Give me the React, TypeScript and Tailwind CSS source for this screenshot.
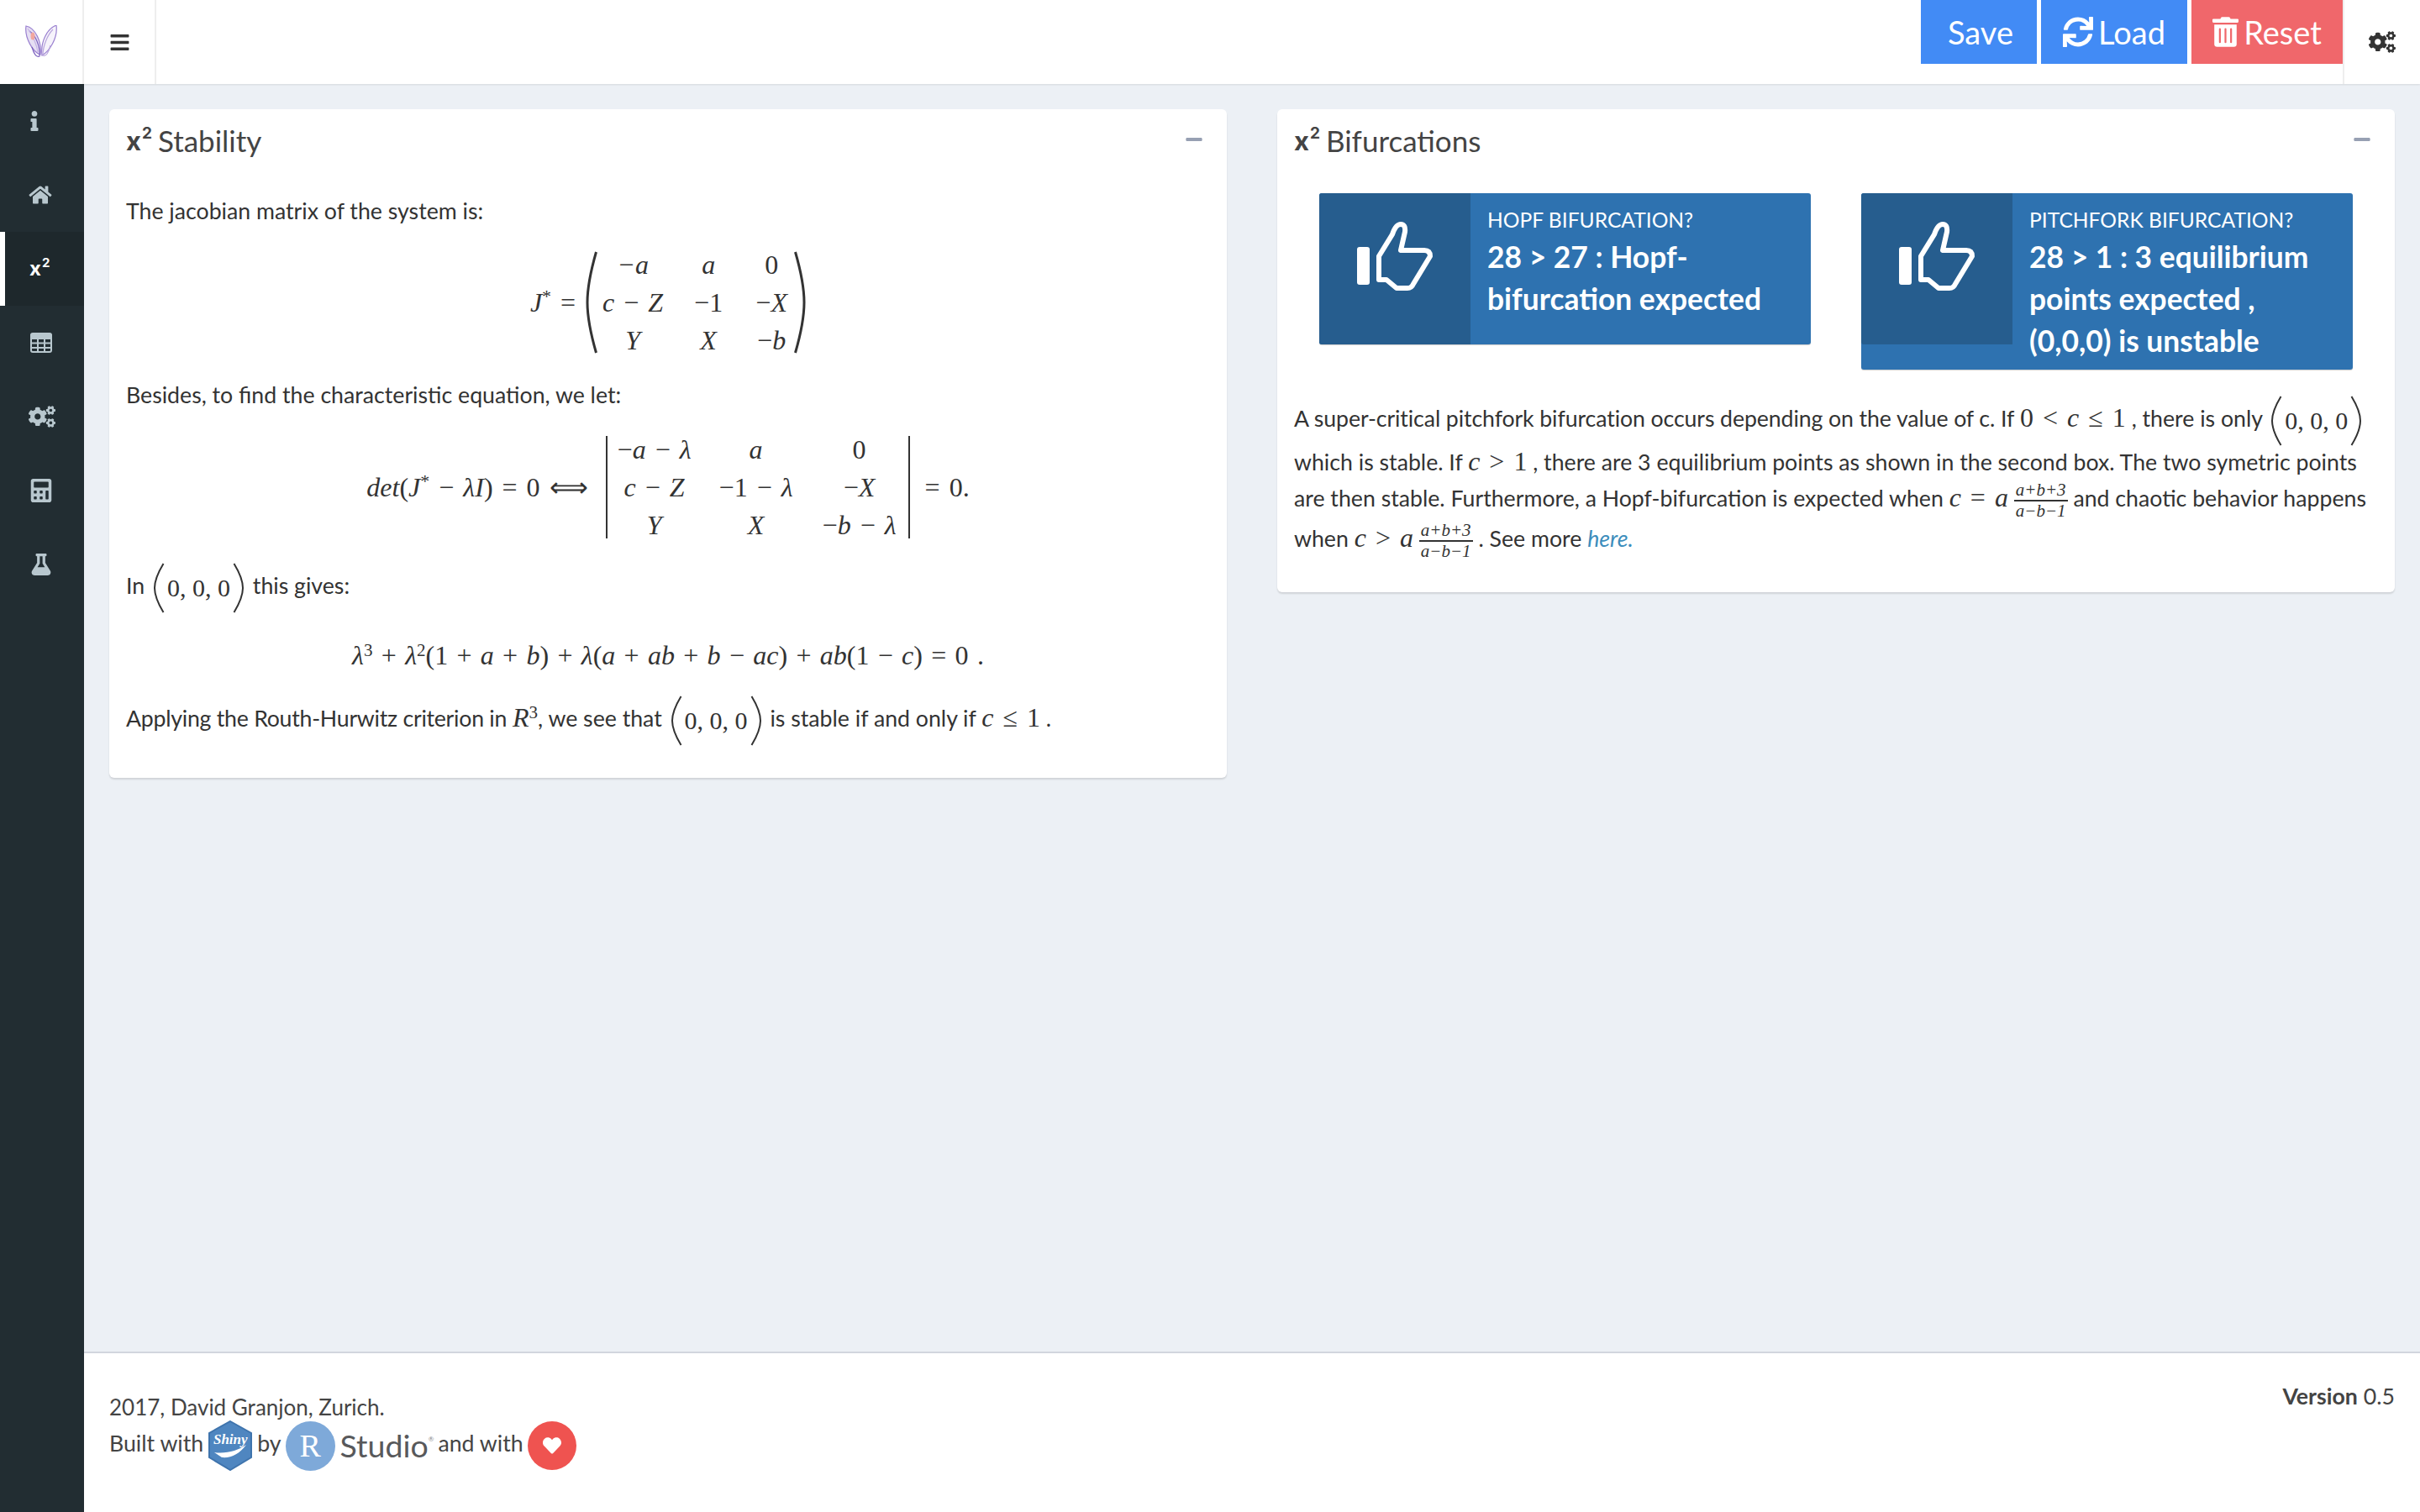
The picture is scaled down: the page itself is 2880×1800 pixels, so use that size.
import { FaBars, FaCalculator, FaCogs, FaFlask, FaHeart, FaHome, FaInfo, FaMinus, FaSync, FaTrashAlt } from 'react-icons/fa';
import type { ReactNode } from 'react';

const serif = "font-['Liberation_Serif',serif]";
const math = "font-['Liberation_Serif',serif] text-[32px] [word-spacing:3px]";

function TableIcon() {
    return (
        <svg width="26" height="24" viewBox="0 0 26 24" fill="none" stroke="currentColor" strokeWidth="2">
            <rect x="1" y="1" width="24" height="22" rx="2" />
            <path d="M1 7 H25 M1 12.5 H25 M1 18 H25 M9 7 V23 M17 7 V23" />
            <path d="M1 3 H25 V7 H1 Z" fill="currentColor" />
        </svg>
    );
}

// the x² mark used as an icon, real text
function Square({ big }: { big?: boolean }) {
    return (
        <span className={`inline-flex items-start font-bold leading-none font-['Inter',sans-serif] ${big ? 'text-[31px]' : 'text-[24px]'}`}>
            <span>x</span>
            <span className={big ? 'text-[19px] -mt-[3px] ml-[1px]' : 'text-[15px] -mt-[3px] ml-[1px]'}>2</span>
        </span>
    );
}

const sideItems = [
    { icon: <FaInfo className="w-[14px] h-[24px]" />, x: 'pl-[34px]' },
    { icon: <FaHome className="w-[28px] h-[24px]" />, x: 'pl-[34px]' },
    { icon: <Square />, x: 'pl-[30px]', active: true },
    { icon: <TableIcon />, x: 'pl-[36px]' },
    { icon: <FaCogs className="w-[32px] h-[28px]" />, x: 'pl-[34px]' },
    { icon: <FaCalculator className="w-[26px] h-[28px]" />, x: 'pl-[36px]' },
    { icon: <FaFlask className="w-[26px] h-[26px]" />, x: 'pl-[36px]' },
];

// tall bracket drawn around a matrix or a tuple
function Paren({ h, flip }: { h: number; flip?: boolean }) {
    return (
        <svg width="14" height={h} viewBox={`0 0 14 ${h}`} className={flip ? 'shrink-0 -scale-x-100' : 'shrink-0'}>
            <path
                d={`M12.5 1 C4 ${h * 0.25} 2 ${h * 0.38} 2 ${h / 2} C2 ${h * 0.62} 4 ${h * 0.75} 12.5 ${h - 1}`}
                fill="none"
                stroke="#333"
                strokeWidth={h > 100 ? 3 : 2}
            />
        </svg>
    );
}

function I({ children }: { children: ReactNode }) {
    return <span className="italic">{children}</span>;
}

function Star() {
    return <sup className="text-[22px]">*</sup>;
}

function Tuple() {
    return (
        <span className={`inline-flex items-center align-middle gap-[3px] mx-[3px] ${serif} text-[30px] text-[#333]`}>
            <Paren h={60} />
            <span>0, 0, 0</span>
            <Paren h={60} flip />
        </span>
    );
}

function Frac({ top, bottom }: { top: string; bottom: string }) {
    return (
        <span className={`inline-flex flex-col items-center align-middle -my-[8px] text-[21px] leading-[23px] italic ${serif}`}>
            <span className="border-b-2 border-[#333] px-[2px]">{top}</span>
            <span>{bottom}</span>
        </span>
    );
}

function Cell({ children }: { children: ReactNode }) {
    return <div className="text-center h-[45px] leading-[45px] whitespace-nowrap">{children}</div>;
}

function Box({ title, className, children }: { title: string; className: string; children: ReactNode }) {
    return (
        <section className={`bg-white rounded-[6px] shadow-[0_2px_2px_rgba(0,0,0,0.12)] ${className}`}>
            <div className="flex items-center justify-between h-[74px] px-[20px]">
                <h3 className="flex items-center gap-[7px] text-[35px] text-[#444] leading-none">
                    <Square big />
                    {title}
                </h3>
                <FaMinus className="w-[22px] h-[22px] mr-[8px] -mt-[2px] text-[#97a0b3]" />
            </div>
            {children}
        </section>
    );
}

function ThumbIcon() {
    return (
        <svg width="90" height="83" viewBox="0 0 90 83" fill="none" stroke="white" strokeWidth="6" className="shrink-0">
            <rect x="0" y="30" width="15" height="45" rx="3" fill="white" stroke="none" />
            <path d="M26 41 L42 15 Q46 3 52 3 Q58 3 57 12 L52 34 L80 34 Q87 34 87 41 L67 74 Q65 79 60 79 L47 79 L35 69 L26 69 Z" strokeLinejoin="round" />
        </svg>
    );
}

function InfoBox({ label, lines, h }: { label: string; lines: string[]; h: string }) {
    return (
        <div className={`flex-1 bg-[#2e72b0] text-white rounded-[3px] shadow-[0_1px_1px_rgba(0,0,0,0.2)] flex items-start ${h}`}>
            <div className="w-[180px] h-[180px] pb-[29px] bg-[#265d8e] rounded-l-[3px] flex items-center justify-center shrink-0">
                <ThumbIcon />
            </div>
            <div className="pl-[20px] pt-[12px] whitespace-nowrap">
                <div className="text-[24.6px] leading-[39px] uppercase">{label}</div>
                {lines.map((line) => (
                    <div key={line} className="text-[35.4px] font-bold leading-[50px]">{line}</div>
                ))}
            </div>
        </div>
    );
}

function Logo() {
    return (
        <svg width="38" height="40" viewBox="0 0 38 40" fill="none" stroke="#9a80d0" strokeWidth="1.2">
            <path d="M1 1 C12 3 20 20 18 35 C9 32 -1 15 1 1 Z" fill="#e6dff3" />
            <path d="M37 0 C26 4 18 20 20 36 C29 31 39 15 37 0 Z" fill="#f6f3fb" />
            <path d="M5 7 C12 12 18 24 17 37 C13 39 10 33 8 26" stroke="#7a5fbd" />
            <path d="M33 5 C27 11 21 24 21 36 C25 38 28 32 30 24" stroke="#b9a6dd" />
            <path d="M3 4 C9 12 14 24 15 32" stroke="#c4b3e4" />
            <ellipse cx="9" cy="13" rx="2.5" ry="4.5" fill="#f2a79f" stroke="none" />
        </svg>
    );
}

function ShinyLogo() {
    return (
        <span className="relative inline-flex items-center justify-center w-[54px] h-[60px] shrink-0">
            <svg width="54" height="60" viewBox="0 0 54 60" className="absolute inset-0">
                <polygon points="27,1 52,15 52,44 27,59 2,44 2,15" fill="#4f86c0" stroke="#3f74ad" strokeWidth="2" />
                <path d="M8 38 C22 40 36 36 46 29 C38 40 28 45 17 44 Z" fill="white" />
            </svg>
            <span className={`relative -mt-[14px] italic font-bold text-[17px] text-white ${serif}`}>Shiny</span>
        </span>
    );
}

function RStudioLogo() {
    return (
        <span className="inline-flex items-center gap-[6px] shrink-0">
            <span className={`w-[59px] h-[59px] rounded-full bg-[#7ea9d9] text-white text-[38px] flex items-center justify-center ${serif}`}>R</span>
            <span className="text-[37.5px] text-[#58595b] leading-none">Studio</span>
            <span className="-ml-[6px] -mt-[16px] text-[8px] text-[#888] leading-none">®</span>
        </span>
    );
}

export default function App() {
    return (
        <div className="w-[2880px] h-[1800px] flex flex-col bg-[#ecf0f5] overflow-hidden font-['Lato',sans-serif] text-[#333] text-[26.7px]">
            {/* Header */}
            <header className="h-[100px] bg-white flex shrink-0 shadow-[0_1px_2px_rgba(0,0,0,0.1)] relative">
                <div className="w-[100px] border-r-2 border-[#eee] flex items-center justify-center">
                    <Logo />
                </div>
                <div className="w-[86px] border-r-2 border-[#eee] flex items-center justify-center">
                    <FaBars className="w-[25px] h-[25px] text-[#333]" />
                </div>
                <div className="flex-1 flex justify-end items-start gap-[5px] text-white text-[38px]">
                    <button className="w-[138px] h-[76px] pl-[4px] bg-[#428bf5] flex items-center justify-center">Save</button>
                    <button className="w-[174px] h-[76px] bg-[#428bf5] flex items-center justify-center gap-[6px]">
                        <FaSync className="w-[36px] h-[36px]" />
                        Load
                    </button>
                    <button className="w-[180px] h-[76px] bg-[#f0676b] flex items-center justify-center gap-[6px]">
                        <FaTrashAlt className="w-[31px] h-[36px]" />
                        Reset
                    </button>
                </div>
                <div className="w-[92px] border-l-2 border-[#eee] flex items-center pl-[29px]">
                    <FaCogs className="w-[32px] h-[28px] text-[#333]" />
                </div>
            </header>

            <div className="flex-1 flex min-h-0">
                {/* Sidebar */}
                <nav className="w-[100px] bg-[#222d32] shrink-0">
                    {sideItems.map((item, i) => (
                        <div
                            key={i}
                            className={`h-[88px] flex items-center ${item.x} ${item.active ? 'bg-[#1e282c] text-white border-l-[6px] border-white !pl-[29px]' : 'text-[#b8c7ce]'}`}
                        >
                            {item.icon}
                        </div>
                    ))}
                </nav>

                <div className="flex-1 flex flex-col min-w-0">
                    <main className="flex-1 grid grid-cols-2 gap-[60px] items-start p-[30px]">
                        {/* Stability */}
                        <Box title="Stability" className="h-[796px]">
                            <div className="px-[20px] pt-[28px]">
                                <p className="leading-[38px]">The jacobian matrix of the system is:</p>

                                <div className={`flex justify-center items-center mt-[29px] h-[122px] ${math}`}>
                                    <span className="mr-[12px] whitespace-nowrap"><I>J</I><Star /> =</span>
                                    <Paren h={122} />
                                    <div className="grid grid-cols-[84px_96px_54px]">
                                        <Cell><I>−a</I></Cell>
                                        <Cell><I>a</I></Cell>
                                        <Cell>0</Cell>
                                        <Cell><I>c</I> − <I>Z</I></Cell>
                                        <Cell>−1</Cell>
                                        <Cell>−<I>X</I></Cell>
                                        <Cell><I>Y</I></Cell>
                                        <Cell><I>X</I></Cell>
                                        <Cell>−<I>b</I></Cell>
                                    </div>
                                    <Paren h={122} flip />
                                </div>

                                <p className="leading-[38px] mt-[30px]">Besides, to find the characteristic equation, we let:</p>

                                <div className={`flex justify-center items-center mt-[30px] h-[122px] ${math}`}>
                                    <span className="mr-[21px] whitespace-nowrap"><I>det</I>(<I>J</I><Star /> − <I>λI</I>) = 0 ⟺</span>
                                    <div className="h-[122px] flex items-center border-x-2 border-[#333]">
                                        <div className="grid grid-cols-[112px_130px_116px]">
                                            <Cell>−<I>a</I> − <I>λ</I></Cell>
                                            <Cell><I>a</I></Cell>
                                            <Cell>0</Cell>
                                            <Cell><I>c</I> − <I>Z</I></Cell>
                                            <Cell>−1 − <I>λ</I></Cell>
                                            <Cell>−<I>X</I></Cell>
                                            <Cell><I>Y</I></Cell>
                                            <Cell><I>X</I></Cell>
                                            <Cell>−<I>b</I> − <I>λ</I></Cell>
                                        </div>
                                    </div>
                                    <span className="ml-[18px]">= 0.</span>
                                </div>

                                <p className="mt-[26px] leading-[60px]">In <Tuple /> this gives:</p>

                                <div className={`text-center mt-[31px] h-[38px] leading-[38px] font-['Liberation_Serif',serif] text-[32px] [word-spacing:2.3px]`}>
                                    <I>λ</I><sup className="text-[21px]">3</sup> + <I>λ</I><sup className="text-[21px]">2</sup>(1 + <I>a</I> + <I>b</I>) + <I>λ</I>(<I>a</I> + <I>ab</I> + <I>b</I> − <I>ac</I>) + <I>ab</I>(1 − <I>c</I>) = 0 .
                                </div>

                                <p className="mt-[25px] leading-[60px]">
                                    <span className="tracking-[-0.25px]">Applying the Routh-Hurwitz criterion in</span> <span className={math}><I>R</I><sup className="text-[21px]">3</sup></span>, we see that <Tuple /> is stable if and only if <span className={math}><I>c</I> ≤ 1</span> .
                                </p>
                            </div>
                        </Box>

                        {/* Bifurcations */}
                        <Box title="Bifurcations" className="h-[575px]">
                            <div className="px-[20px]">
                                <div className="flex items-start gap-[60px] px-[30px] mt-[26px]">
                                    <InfoBox label="Hopf bifurcation?" lines={['28 > 27 : Hopf-', 'bifurcation expected']} h="h-[180px]" />
                                    <InfoBox label="Pitchfork bifurcation?" lines={['28 > 1 : 3 equilibrium', 'points expected ,', '(0,0,0) is unstable']} h="h-[210px]" />
                                </div>
                                <div className="mt-[27px] whitespace-nowrap">
                                    <div className="h-[60px] leading-[60px]">
                                        <span className="tracking-[-0.1px]">A super-critical pitchfork bifurcation occurs depending on the value of c. If</span> <span className={math}>0 &lt; <I>c</I> ≤ 1</span> , there is only <Tuple />
                                    </div>
                                    <div className="h-[44px] leading-[44px]">
                                        which is stable. If <span className={math}><I>c</I> &gt; 1</span> , there are 3 equilibrium points as shown in the second box. The two symetric points
                                    </div>
                                    <div className="h-[42px] leading-[42px]">
                                        are then stable. Furthermore, a Hopf-bifurcation is expected when <span className={math}><I>c</I> = <I>a</I></span> <Frac top="a+b+3" bottom="a−b−1" /> and chaotic behavior happens
                                    </div>
                                    <div className="h-[46px] leading-[46px] mt-[4px]">
                                        when <span className={math}><I>c</I> &gt; <I>a</I></span> <Frac top="a+b+3" bottom="a−b−1" /> . See more <a className="italic text-[#3c8dbc]">here.</a>
                                    </div>
                                </div>
                            </div>
                        </Box>
                    </main>

                    {/* Footer */}
                    <footer className="h-[191px] shrink-0 bg-white border-t-2 border-[#d2d6de] flex justify-between px-[30px] text-[#444]">
                        <div className="pt-[45px]">
                            <div className="leading-[38px] text-[26px]">2017, David Granjon, Zurich.</div>
                            <div className="flex items-center gap-[5px] h-[60px] -mt-[3px]">
                                <span className="-mt-[5px]">Built with</span>
                                <ShinyLogo />
                                <span className="-mt-[5px]">by</span>
                                <RStudioLogo />
                                <span className="-mt-[5px]">and with</span>
                                <span className="w-[58px] h-[58px] rounded-full bg-[#ef5350] flex items-center justify-center">
                                    <FaHeart className="w-[22px] h-[22px] text-white" />
                                </span>
                            </div>
                        </div>
                        <div className="pt-[31px]"><b>Version</b> 0.5</div>
                    </footer>
                </div>
            </div>
        </div>
    );
}
